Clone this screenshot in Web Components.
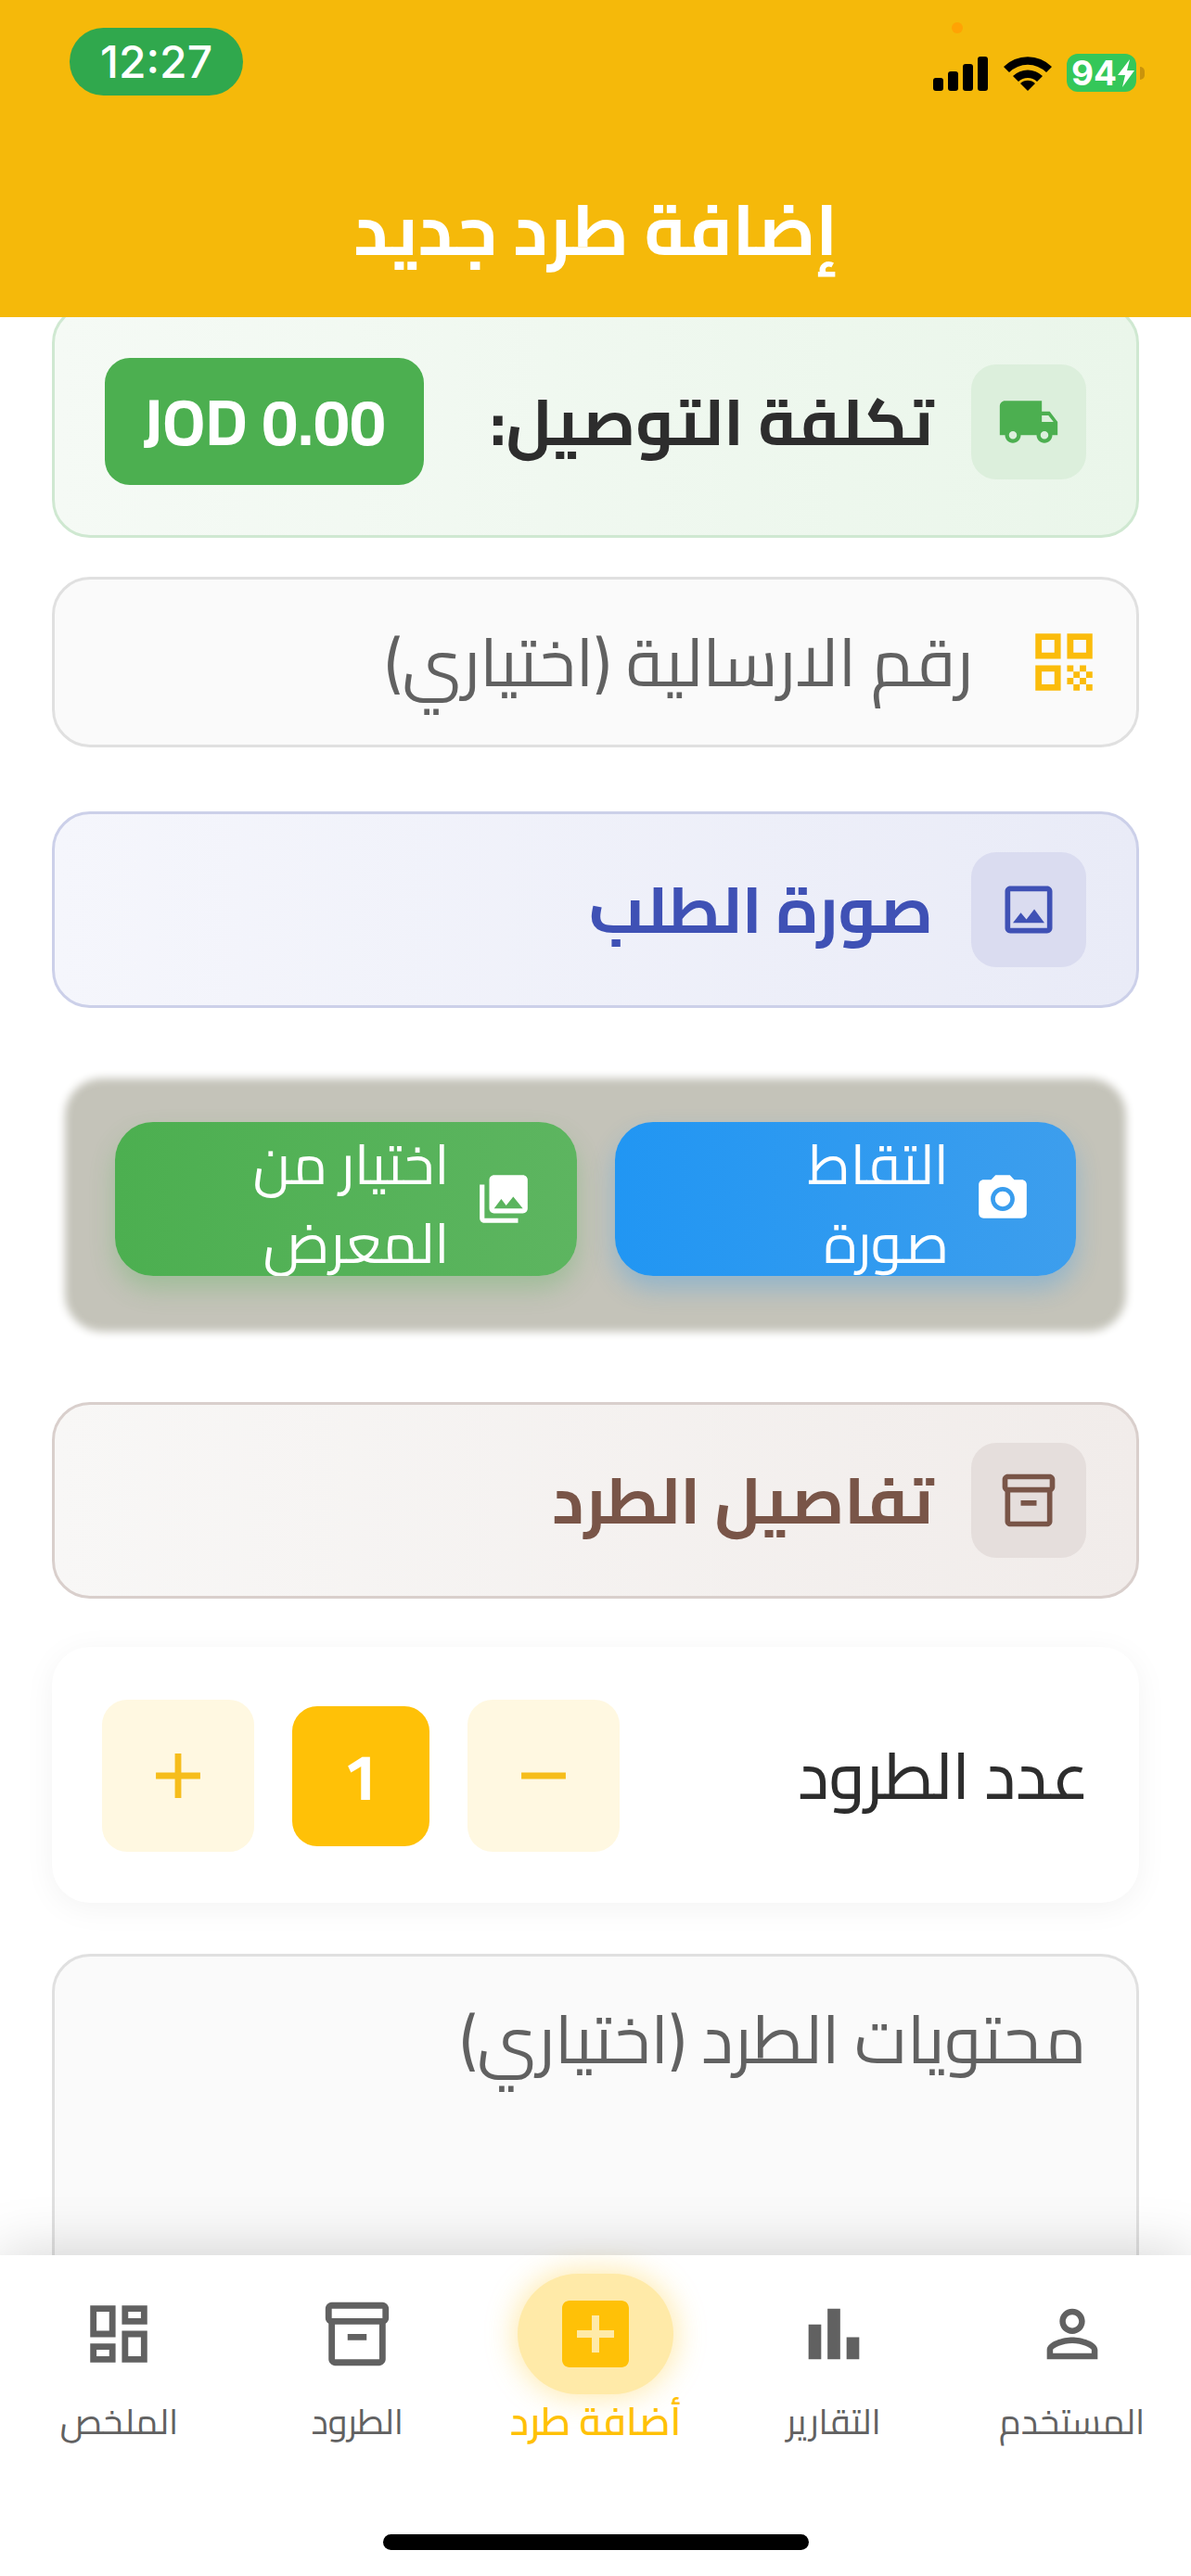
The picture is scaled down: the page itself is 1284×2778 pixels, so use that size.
<!DOCTYPE html>
<html lang="ar" dir="rtl">
<head>
  <meta charset="UTF-8">
  <meta name="viewport" content="width=device-width, initial-scale=1.0">
  <title>إضافة طرد جديد</title>
  <style>
    html, body { height: 100%; }
    body {
      margin: 0;
      background: #fff;
      color: #2d2d2d;
      font-family: Cairo, "Noto Sans Arabic", "DejaVu Sans", "Open Sans", sans-serif;
      --amber: #ffc107;
      --green: #4caf50;
      --text-s: 38px;
      --text-m: 60px;
      --text-l: 70px;
      --text-xl: 76px;
    }
  </style>
</head>
<body>
  <app-screen>
    <status-bar slot="top" time="12:27" battery="94"></status-bar>
    <page-title slot="top">إضافة طرد جديد</page-title>

    <section-card class="cost" icon="truck" tone="green">
      تكلفة التوصيل:
      <price-tag slot="end">JOD 0.00</price-tag>
    </section-card>
    <text-field icon="qr" label="رقم الارسالية (اختياري)"></text-field>
    <section-card class="photo" icon="image" tone="indigo">صورة الطلب</section-card>
    <photo-actions>
      <photo-button icon="camera" tone="blue">التقاط<br>صورة</photo-button>
      <photo-button icon="gallery" tone="green">اختيار من<br>المعرض</photo-button>
    </photo-actions>
    <section-card class="details" icon="box" tone="brown">تفاصيل الطرد</section-card>
    <count-stepper value="1">عدد الطرود</count-stepper>
    <text-field multiline label="محتويات الطرد (اختياري)"></text-field>

    <nav-bar slot="bottom">
      <nav-item icon="person">المستخدم</nav-item>
      <nav-item icon="chart">التقارير</nav-item>
      <nav-item icon="addBox" active>أضافة طرد</nav-item>
      <nav-item icon="box">الطرود</nav-item>
      <nav-item icon="dashboard">الملخص</nav-item>
    </nav-bar>
  </app-screen>

  <!-- page shell: fixed bars, scrolling form between them -->
  <template id="tpl-app-screen">
    <style>
      :host { display: flex; flex-direction: column; height: 100vh; overflow: hidden; }
      header { background: #f5b90a; }
      main { flex: 1; min-height: 0; overflow: hidden; }
      .form { display: flex; flex-direction: column; margin-top: -13px; padding: 0 56px; }
      ::slotted(text-field) { margin-top: 42px; }
      ::slotted(.photo) { margin-top: 69px; }
      ::slotted(photo-actions) { margin-top: 86px; }
      ::slotted(.details) { margin-top: 86px; }
      ::slotted(count-stepper) { margin-top: 52px; }
      ::slotted(text-field[multiline]) { margin-top: 55px; }
    </style>
    <header><slot name="top"></slot></header>
    <main><div class="form"><slot></slot></div></main>
    <slot name="bottom"></slot>
  </template>

  <template id="tpl-status-bar">
    <style>
      :host { display: flex; direction: ltr; justify-content: space-between; align-items: flex-start; padding: 30px 50px 0 75px; }
      time {
        padding: 0 33px; border-radius: 37px; background: #30a84d; color: #fff;
        font: 500 48px/73px Inter, "Liberation Sans", sans-serif;
      }
      .right { position: relative; display: flex; align-items: center; gap: 16px; padding-top: 28px; }
      .mic { position: absolute; left: 20px; top: -6px; width: 12px; height: 12px; border-radius: 50%; background: #ffa304; }
      svg { display: block; }
      .battery { display: flex; align-items: center; gap: 4px; }
      .level {
        display: flex; align-items: center; padding: 0 1px 0 5px; border-radius: 12px; background: #34c759; color: #fff;
        font: 700 37px/41px Inter, "Liberation Sans", sans-serif;
      }
      .cap { width: 5px; height: 14px; border-radius: 0 5px 5px 0; background: #c9930c; }
    </style>
    <time></time>
    <div class="right">
      <span class="mic"></span>
      <svg width="60" height="38" viewBox="0 0 60 38"><rect y="24" width="11" height="14" rx="3"/><rect x="16" y="17" width="11" height="21" rx="3"/><rect x="32" y="9" width="11" height="29" rx="3"/><rect x="48" y="1" width="11" height="37" rx="3"/></svg>
      <svg width="52" height="38" viewBox="0 0 52 38"><path d="M0 12a37 37 0 0 1 52 0l-6 6a28.500 28.500 0 0 0-40 0zM10 22a23 23 0 0 1 32 0l-6 6a14.500 14.500 0 0 0-20 0zM18 30a11.500 11.500 0 0 1 16 0l-8 8z"/></svg>
      <div class="battery">
        <span class="level"><span id="pct"></span><svg width="20" height="30" viewBox="0 0 20 30"><path fill="#fff" d="M14 0 1 17h8L6 30 19 12h-8z"/></svg></span>
        <span class="cap"></span>
      </div>
    </div>
  </template>

  <template id="tpl-page-title">
    <style>
      :host { display: block; }
      h1 { margin: 0; padding: 90px 56px 41px; color: #fff; text-align: center; font-size: var(--text-xl); font-weight: 700; line-height: 108px; }
    </style>
    <h1><slot></slot></h1>
  </template>

  <template id="tpl-section-card">
    <style>
      :host {
        display: flex; align-items: center; gap: 41px; box-sizing: border-box; padding: 41px 54px;
        border: 3px solid var(--line); border-radius: 41px; background: linear-gradient(to left, var(--from), var(--to));
        color: var(--ink);
      }
      :host([tone="green"]) { padding: 54px; --ink: var(--green); --line: #cfe8d1; --from: #eaf6ea; --to: #f5faf5; --tile: #dcefdc; }
      :host([tone="indigo"]) { --ink: #3f51b5; --line: #ccd0e9; --from: #e9ebf7; --to: #f5f6fc; --tile: #dadcf0; }
      :host([tone="brown"]) { --ink: #795548; --line: #d9cfcc; --from: #f1ecea; --to: #f8f7f6; --tile: #e5dedc; }
      .tile { display: flex; padding: 28px; border-radius: 27px; background: var(--tile); }
      h2 { flex: 1; margin: 0; font-size: var(--text-l); font-weight: 700; line-height: 72px; white-space: nowrap; }
      :host([tone="green"]) h2 { color: #2d2d2d; }
    </style>
    <span class="tile"><app-icon size="68"></app-icon></span>
    <h2><slot></slot></h2>
    <slot name="end"></slot>
  </template>

  <template id="tpl-price-tag">
    <style>
      :host {
        display: block; direction: ltr; padding: 27px 41px; border-radius: 27px; background: var(--green); color: #fff;
        font-size: var(--text-l); font-weight: 700; line-height: 83px; white-space: nowrap;
      }
    </style>
    <slot></slot>
  </template>

  <template id="tpl-text-field">
    <style>
      :host { display: block; }
      label {
        display: flex; align-items: center; gap: 57px; box-sizing: border-box; padding: 20px 37px;
        border: 3px solid #e0e0e0; border-radius: 41px; background: #fafafa; color: #fbbc0b;
      }
      input, textarea {
        flex: 1; min-width: 0; height: 138px; padding: 0; border: 0; outline: 0; background: none; resize: none;
        color: #2d2d2d; font: inherit; font-size: 72px; line-height: 138px;
      }
      textarea { height: 400px; }
      :host([multiline]) label { padding: 20px 54px; }
      ::placeholder { color: #616161; opacity: 1; }
    </style>
    <label></label>
  </template>

  <template id="tpl-photo-actions">
    <style>
      /* the shadow keeps the panel colour and only softens its edge */
      :host {
        display: flex; gap: 41px; margin: 0 24px; padding: 37px 44px 50px;
        border-radius: 30px; background: #c4c3b9; box-shadow: 0 0 10px 10px #c4c3b9;
      }
    </style>
    <slot></slot>
  </template>

  <template id="tpl-photo-button">
    <style>
      :host { display: flex; flex: 1; }
      button {
        display: flex; flex: 1; align-items: center; gap: 27px; height: 166px; padding: 0 48px; overflow: hidden;
        border: 0; border-radius: 41px; background: linear-gradient(to left, var(--from), var(--to));
        box-shadow: 0 14px 27px var(--glow); color: #fff; text-align: start;
        font: inherit; font-size: var(--text-m); line-height: 85px;
      }
      button span { padding-top: 10px; }
      :host([tone="blue"]) { --from: #3d9eed; --to: #2196f3; --glow: rgba(33, 150, 243, .3); }
      :host([tone="green"]) { --from: #5db560; --to: #4caf50; --glow: rgba(76, 175, 80, .3); }
    </style>
    <button type="button"><app-icon size="62"></app-icon><span><slot></slot></span></button>
  </template>

  <template id="tpl-count-stepper">
    <style>
      :host {
        display: flex; align-items: center; gap: 41px; padding: 57px 54px 55px; border-radius: 41px;
        background: #fff; box-shadow: 0 6px 34px rgba(0, 0, 0, .05);
      }
      label { flex: 1; font-size: var(--text-l); line-height: 82px; font-weight: 500; }
      button { display: flex; padding: 41px; border: 0; border-radius: 27px; background: #fff8e1; color: #f6bd1b; }
      output {
        min-width: 148px; padding: 34px 0; border-radius: 27px; background: var(--amber); color: #fff; text-align: center;
        font-size: var(--text-l); font-weight: 700; line-height: 83px;
      }
    </style>
    <label for="count"><slot></slot></label>
    <button type="button" aria-label="إنقاص" id="minus"><app-icon name="minus" size="82"></app-icon></button>
    <output id="count"></output>
    <button type="button" aria-label="زيادة" id="plus"><app-icon name="plus" size="82"></app-icon></button>
  </template>

  <template id="tpl-nav-bar">
    <style>
      :host { position: relative; display: block; background: #fff; box-shadow: 0 0 60px rgba(0, 0, 0, .18); }
      nav { display: flex; }
      .home { width: 459px; height: 17px; margin: 93px auto 28px; border-radius: 9px; background: #000; }
    </style>
    <nav><slot></slot></nav>
    <div class="home"></div>
  </template>

  <template id="tpl-nav-item">
    <style>
      :host { display: block; flex: 1 1 0; min-width: 0; color: #616161; font-size: var(--text-s); line-height: 58px; }
      a { display: flex; flex-direction: column; align-items: center; padding-top: 20px; color: inherit; text-decoration: none; white-space: nowrap; }
      .halo { display: flex; align-items: center; justify-content: center; width: 168px; height: 130px; border-radius: 65px; }
      :host([active]) { color: var(--amber); font-size: 42px; font-weight: 600; }
      :host([active]) .halo { background: #ffeaa8; box-shadow: 0 0 34px rgba(255, 193, 7, .4); }
    </style>
    <a href="#"><span class="halo"><app-icon size="82"></app-icon></span><slot></slot></a>
  </template>

  <script>
    const ICONS = {
      truck: 'M20 8h-3V4H3c-1.100 0-2 .9-2 2v11h2c0 1.660 1.340 3 3 3s3-1.340 3-3h6c0 1.660 1.340 3 3 3s3-1.340 3-3h2v-5l-3-4zM6 18.500c-.83 0-1.500-.67-1.500-1.500s.67-1.500 1.500-1.500 1.500.67 1.500 1.500-.67 1.500-1.500 1.500zm13.500-9l1.960 2.500H17V9.500h2.500zm-1.500 9c-.83 0-1.500-.67-1.500-1.500s.67-1.500 1.500-1.500 1.500.67 1.500 1.500-.67 1.500-1.500 1.500z',
      qr: 'M3 11h8V3H3v8zm2-6h4v4H5V5zM3 21h8v-8H3v8zm2-6h4v4H5v-4zM13 3v8h8V3h-8zm6 6h-4V5h4v4zM19 19h2v2h-2zM13 13h2v2h-2zM15 15h2v2h-2zM13 17h2v2h-2zM15 19h2v2h-2zM17 17h2v2h-2zM17 13h2v2h-2zM19 15h2v2h-2z',
      image: 'M19 5v14H5V5h14m0-2H5c-1.100 0-2 .9-2 2v14c0 1.100.9 2 2 2h14c1.100 0 2-.9 2-2V5c0-1.100-.9-2-2-2zm-4.860 8.860l-3 3.870L9 13.140 6 17h12l-3.860-5.140z',
      camera: 'M12 8.800a3.200 3.200 0 1 0 0 6.400 3.200 3.200 0 0 0 0-6.400zM9 2L7.170 4H4c-1.100 0-2 .9-2 2v12c0 1.100.9 2 2 2h16c1.100 0 2-.9 2-2V6c0-1.100-.9-2-2-2h-3.170L15 2H9zm3 15c-2.760 0-5-2.240-5-5s2.240-5 5-5 5 2.240 5 5-2.240 5-5 5z',
      gallery: 'M22 16V4c0-1.100-.9-2-2-2H8c-1.100 0-2 .9-2 2v12c0 1.100.9 2 2 2h12c1.100 0 2-.9 2-2zm-11-4l2.030 2.710L16 11l4 5H8l3-4zM2 6v14c0 1.100.9 2 2 2h14v-2H4V6H2z',
      box: 'M20 2H4c-1 0-2 .9-2 2v3.010c0 .72.43 1.340 1 1.690V20c0 1.100 1.100 2 2 2h14c.9 0 2-.9 2-2V8.700c.57-.35 1-.97 1-1.690V4c0-1.100-1-2-2-2zm-1 18H5V9h14v11zm1-13H4V4h16v3zM9 12h6v2H9z',
      plus: 'M19 13h-6v6h-2v-6H5v-2h6V5h2v6h6v2z',
      minus: 'M19 13H5v-2h14v2z',
      person: 'M12 5.900c1.160 0 2.100.94 2.100 2.100s-.94 2.100-2.100 2.100S9.900 9.160 9.900 8s.94-2.100 2.100-2.100m0 9c2.970 0 6.100 1.460 6.100 2.100v1.100H5.900V17c0-.64 3.130-2.100 6.100-2.100M12 4C9.790 4 8 5.790 8 8s1.790 4 4 4 4-1.790 4-4-1.790-4-4-4zm0 9c-2.670 0-8 1.340-8 4v3h16v-3c0-2.660-5.330-4-8-4z',
      chart: 'M4 9h4v11H4zM16 13h4v7h-4zM10 4h4v16h-4z',
      addBox: 'M19 3H5c-1.110 0-2 .9-2 2v14c0 1.100.89 2 2 2h14c1.100 0 2-.9 2-2V5c0-1.100-.9-2-2-2zm-2 10h-4v4h-2v-4H7v-2h4V7h2v4h4v2z',
      dashboard: 'M19 5v2h-4V5h4M9 5v6H5V5h4m10 8v6h-4v-6h4M9 17v2H5v-2h4M21 3h-8v6h8V3zM11 3H3v10h8V3zm10 8h-8v10h8V11zm-10 4H3v6h8v-6z'
    };

    class AppIcon extends HTMLElement {
      static observedAttributes = ['name', 'size'];
      constructor() {
        super();
        this.attachShadow({ mode: 'open' });
      }
      attributeChangedCallback() {
        const size = this.getAttribute('size') || 24;
        this.shadowRoot.innerHTML = `
          <style>:host { display: block; flex: none; } svg { display: block; }</style>
          <svg width="${size}" height="${size}" viewBox="0 0 24 24" fill="currentColor" aria-hidden="true">
            <path d="${ICONS[this.getAttribute('name')] || ''}"/>
          </svg>`;
      }
    }
    customElements.define('app-icon', AppIcon);

    // clones <template id="tpl-..."> and hands the icon attribute on
    class BaseElement extends HTMLElement {
      constructor() {
        super();
        const tpl = document.getElementById('tpl-' + this.localName);
        this.attachShadow({ mode: 'open' }).appendChild(tpl.content.cloneNode(true));
      }
      $(selector) {
        return this.shadowRoot.querySelector(selector);
      }
      connectedCallback() {
        const icon = this.$('app-icon');
        if (icon && this.hasAttribute('icon')) icon.setAttribute('name', this.getAttribute('icon'));
      }
    }

    class StatusBar extends BaseElement {
      connectedCallback() {
        this.$('time').textContent = this.getAttribute('time');
        this.$('#pct').textContent = this.getAttribute('battery');
      }
    }

    class TextField extends BaseElement {
      connectedCallback() {
        const label = this.$('label');
        if (label.firstChild) return;
        if (this.hasAttribute('icon')) {
          const icon = document.createElement('app-icon');
          icon.setAttribute('name', this.getAttribute('icon'));
          icon.setAttribute('size', 82);
          label.append(icon);
        }
        const field = document.createElement(this.hasAttribute('multiline') ? 'textarea' : 'input');
        field.placeholder = this.getAttribute('label');
        field.setAttribute('aria-label', this.getAttribute('label'));
        label.append(field);
      }
    }

    class CountStepper extends BaseElement {
      connectedCallback() {
        const out = this.$('output');
        out.value = this.getAttribute('value') || 1;
        this.$('#minus').onclick = () => out.value = Math.max(1, +out.value - 1);
        this.$('#plus').onclick = () => out.value = +out.value + 1;
      }
    }

    class NavItem extends BaseElement {
      connectedCallback() {
        super.connectedCallback();
        if (this.hasAttribute('active')) {
          this.$('app-icon').setAttribute('size', 96);
          this.$('a').setAttribute('aria-current', 'page');
        }
      }
    }

    customElements.define('app-screen', class extends BaseElement {});
    customElements.define('status-bar', StatusBar);
    customElements.define('page-title', class extends BaseElement {});
    customElements.define('section-card', class extends BaseElement {});
    customElements.define('price-tag', class extends BaseElement {});
    customElements.define('text-field', TextField);
    customElements.define('photo-actions', class extends BaseElement {});
    customElements.define('photo-button', class extends BaseElement {});
    customElements.define('count-stepper', CountStepper);
    customElements.define('nav-bar', class extends BaseElement {});
    customElements.define('nav-item', NavItem);
  </script>
</body>
</html>
